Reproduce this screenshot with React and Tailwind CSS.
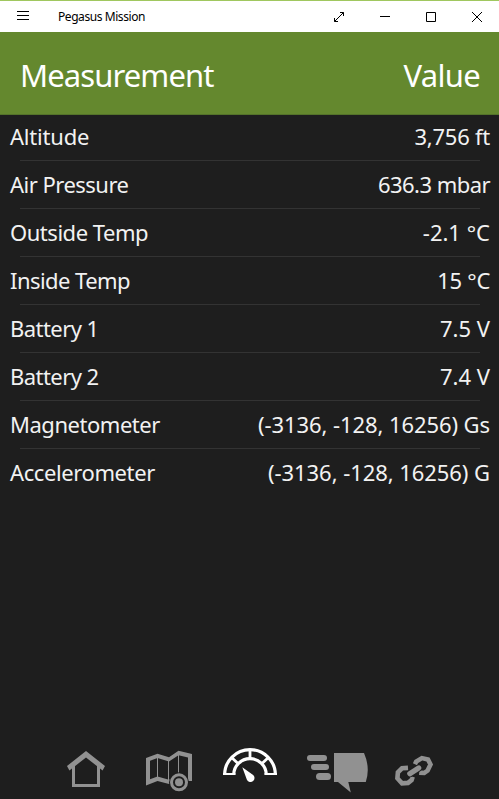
import React from "react";

const rows = [
  { name: "Altitude", value: "3,756 ft", nameTrack: "tracking-[-0.2px]", valueTrack: "tracking-[-0.25px]" },
  { name: "Air Pressure", value: "636.3 mbar", nameTrack: "tracking-[-0.52px]", valueTrack: "tracking-[-0.55px]" },
  { name: "Outside Temp", value: "-2.1 °C", nameTrack: "tracking-[-0.47px]", valueTrack: "tracking-[0px]" },
  { name: "Inside Temp", value: "15 °C", nameTrack: "tracking-[-0.55px]", valueTrack: "tracking-[-0.3px]" },
  { name: "Battery 1", value: "7.5 V", nameTrack: "tracking-[-0.55px]", valueTrack: "tracking-[0px]" },
  { name: "Battery 2", value: "7.4 V", nameTrack: "tracking-[-0.55px]", valueTrack: "tracking-[0px]" },
  { name: "Magnetometer", value: "(-3136, -128, 16256) Gs", nameTrack: "tracking-[-0.47px]", valueTrack: "tracking-[-0.08px]" },
  { name: "Accelerometer", value: "(-3136, -128, 16256) G", nameTrack: "tracking-[-0.4px]", valueTrack: "tracking-[-0.06px]" },
];

function TitleBar() {
  return (
    <header className="flex h-8 shrink-0 items-center border-t border-[#a0c75f] bg-white pr-[17px] pl-[17px] text-black">
      <svg width="12" height="10" viewBox="0 0 12 10" fill="currentColor" shapeRendering="crispEdges" className="-mt-px">
        <path d="M0 0h12v1H0zM0 4h12v1H0zM0 8h12v1H0z" />
      </svg>
      <span className="ml-[29px] text-[12px] leading-4 tracking-[-0.43px]">Pegasus Mission</span>
      <div className="ml-auto flex items-center gap-9">
        <svg width="10" height="10" viewBox="0 0 10 10" fill="none" stroke="currentColor">
          <path d="M6 .5h3.500v3.500M9.500 .5l-9 9M.5 6v3.500H4" />
        </svg>
        <svg width="10" height="10" viewBox="0 0 10 10" fill="none" stroke="currentColor">
          <path d="M0 4.500h10" />
        </svg>
        <svg width="10" height="10" viewBox="0 0 10 10" fill="none" stroke="currentColor">
          <path d="M.5 .5h9v9h-9z" />
        </svg>
        <svg width="10" height="10" viewBox="0 0 10 10" fill="none" stroke="currentColor">
          <path d="M0 0l10 10M10 0L0 10" />
        </svg>
      </div>
    </header>
  );
}

function HomeIcon() {
  return (
    <svg width="40" height="50" viewBox="66 746 40 50" fill="currentColor">
      <path d="M86 751l19 15-2.400 4.500L86 757.500l-16.600 13L67 766z" />
      <path d="M72 766h3v18h22v-18h3v21H72z" />
    </svg>
  );
}

function MapIcon() {
  return (
    <svg width="50" height="50" viewBox="145 746 50 50">
      <path
        fill="currentColor"
        fillRule="evenodd"
        d="M146 758L157.500 753.700 169 757.300 178.500 750.700 192 754V781H188V757.500L178.500 755.200 169 761.500 157.500 758.100 150 760.800V779.300L157.500 776.500 169 779.800 173 777.500V782L169 784 157.500 781 146 785.500z"
      />
      <path fill="none" stroke="currentColor" d="M157.500 756v22M168.500 759v22M178.500 752v21" />
      <circle cx="179" cy="782.300" r="10" fill="#1e1e1e" />
      <circle cx="179" cy="782.300" r="7.500" fill="none" stroke="currentColor" strokeWidth="3" />
      <circle cx="179" cy="782.300" r="4" fill="currentColor" />
    </svg>
  );
}

function GaugeIcon() {
  return (
    <svg width="56" height="50" viewBox="222 746 56 50" fill="none" stroke="currentColor">
      <path strokeWidth="3.200" d="M224.600 775a25.400 25.400 0 0 1 50.800 0" />
      <path strokeWidth="3.200" d="M233.700 775a16.300 16.300 0 0 1 32.600 0" />
      <path strokeWidth="2" d="M223 774h12.400M264.600 774H277" />
      <path strokeWidth="2.800" d="M250 750v9M231.600 757.500l6.700 6.300M268.400 757.500l-6.700 6.300" />
      <path fill="currentColor" stroke="none" d="M242.300 767.300l10.500 7.400a4 4 0 1 1-5.900 5z" />
    </svg>
  );
}

function ChatIcon() {
  return (
    <svg width="62" height="50" viewBox="307 746 62 50" fill="currentColor">
      <rect x="307" y="755" width="20" height="6" rx="3" />
      <rect x="311" y="764" width="18" height="6" rx="3" />
      <rect x="316" y="773" width="15" height="7" rx="3.500" />
      <path d="M334 753h30q6.500 15 1.800 29h-17.500l2.500 10.400L338 782h-4z" />
    </svg>
  );
}

function LinkIcon() {
  return (
    <svg width="42" height="50" viewBox="393 746 42 50" fill="none" stroke="currentColor" strokeWidth="4.600">
      <path d="M415 764.200l1.200-2.700 5.700-3.400 6.100 1.400 2.500 5-2.900 6-3.400 2.500-5-.4" />
      <path d="M412.700 776.800l-1.100 3.200-3.600 2.900-6 .4-4.600-5 .5-6 4.100-4 6-.4" />
      <path stroke="#1e1e1e" strokeWidth="7.200" strokeLinecap="round" d="M409.800 773.700l8.900-5.700" />
      <path strokeWidth="5.200" strokeLinecap="round" d="M409.800 773.700l8.900-5.700" />
    </svg>
  );
}

export default function App() {
  return (
    <div className="flex h-[799px] w-[499px] flex-col overflow-hidden bg-[#1e1e1e] font-['Noto_Sans','Open_Sans',sans-serif] text-[#f2f2f2]">
      <TitleBar />
      <div className="flex h-[83px] shrink-0 items-center justify-between border-b border-[#54732a] bg-[#64882e] pr-[19px] pl-5 pt-[3px] text-[31px] leading-10 text-white">
        <span className="tracking-[-0.9px]">Measurement</span>
        <span className="tracking-[-0.7px]">Value</span>
      </div>
      <main className="flex grow flex-col">
        {rows.map((row, i) => (
          <div key={row.name}>
            <div className={`flex items-center justify-between pr-[9px] pl-[10px] text-[22px] leading-none ${i === 0 ? "h-[45px] pb-[3px]" : "h-[47px] pb-[2px]"}`}>
              <span className={row.nameTrack}>{row.name}</span>
              <span className={row.valueTrack}>{row.value}</span>
            </div>
            {i < rows.length - 1 && <div className="mr-[19px] ml-5 h-px bg-[#333333]" />}
          </div>
        ))}
      </main>
      <nav className="flex h-[53px] shrink-0 items-start pl-[66px] text-[#919191]">
        <HomeIcon />
        <div className="ml-[39px]"><MapIcon /></div>
        <div className="ml-[27px] text-white"><GaugeIcon /></div>
        <div className="ml-[29px]"><ChatIcon /></div>
        <div className="ml-6"><LinkIcon /></div>
      </nav>
    </div>
  );
}
